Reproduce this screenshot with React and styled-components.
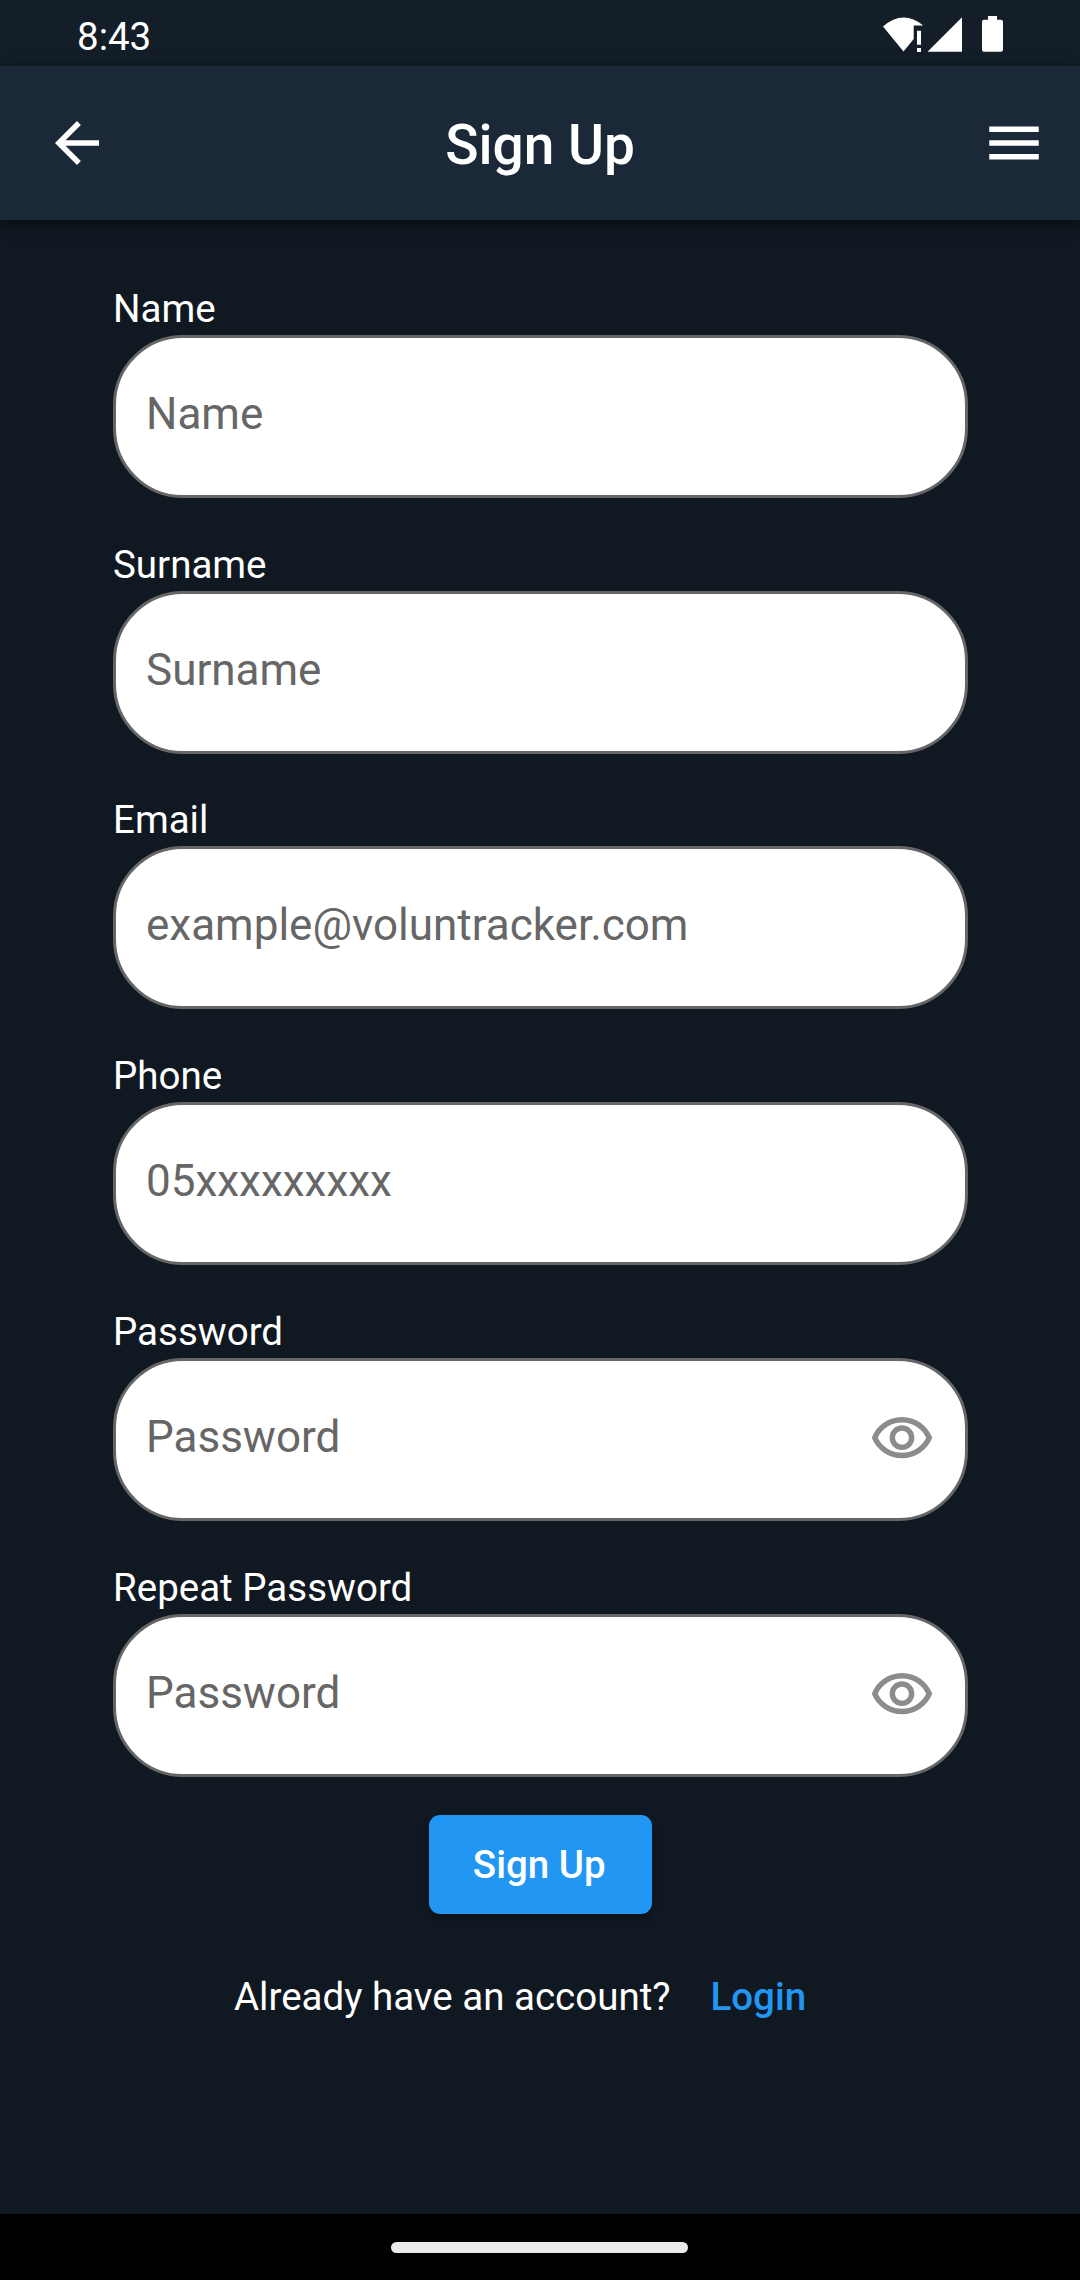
import React from "react";
import styled, { createGlobalStyle } from "styled-components";

const Global = createGlobalStyle`
  *, *::before, *::after { box-sizing: border-box; }
  html, body { margin: 0; padding: 0; background: #101821; }
  body { font-family: Roboto, sans-serif; color: #fff; }
  button, input { font-family: inherit; }
`;

const Screen = styled.div`
  display: flex;
  flex-direction: column;
  width: 1080px;
  height: 2280px;
  background: #101821;
  overflow: hidden;
`;

const StatusBar = styled.div`
  display: flex;
  align-items: center;
  justify-content: space-between;
  height: 66px;
  flex: none;
  padding: 6px 77px 0 77px;
  background: #141e28;
`;

const Clock = styled.span`
  font-size: 38.5px;
  line-height: 45px;
`;

const StatusIcons = styled.svg`
  display: block;
  width: 121px;
  height: 37px;
  margin-bottom: 3px;
  fill: #fff;
`;

const AppBar = styled.header`
  display: grid;
  grid-template-columns: 154px 1fr 154px;
  align-items: center;
  height: 154px;
  flex: none;
  background: #1b2838;
  box-shadow: 0 5px 11px rgba(0, 0, 0, 0.3), 0 2px 20px rgba(0, 0, 0, 0.16);
`;

const Title = styled.h1`
  margin: 0;
  padding-top: 4px;
  text-align: center;
  font-size: 55px;
  line-height: 64px;
  font-weight: 500;
`;

const IconButton = styled.button`
  display: flex;
  align-items: center;
  justify-content: ${(p) => (p.$end ? "flex-end" : "flex-start")};
  height: 154px;
  padding: ${(p) => (p.$end ? "0 33px 0 0" : "0 0 0 44px")};
  border: 0;
  background: none;
`;

const Glyph = styled.svg`
  display: block;
  flex: none;
  width: 66px;
  height: 66px;
  fill: ${(p) => p.$color || "#fff"};
`;

const Form = styled.form`
  display: flex;
  flex-direction: column;
  align-items: center;
  flex: 1;
  padding: 65.9px 112.5px 0 113px;
`;

const Field = styled.label`
  display: flex;
  flex-direction: column;
  width: 100%;
  height: 255.75px;
  flex: none;
`;

const LabelText = styled.span`
  height: 49px;
  flex: none;
  line-height: 45px;
  font-size: 38.5px;
`;

const InputBox = styled.span`
  display: flex;
  align-items: center;
  height: 163px;
  padding: 0 30px;
  border: 3px solid #666;
  border-radius: 70px;
  background: #fff;
`;

const Input = styled.input`
  flex: 1;
  min-width: 0;
  height: 60px;
  padding: 0 0 5px;
  border: 0;
  outline: 0;
  background: transparent;
  font-size: 44px;
  &::placeholder { color: #666; opacity: 1; }
`;

const SubmitButton = styled.button`
  width: 223px;
  height: 99px;
  margin-top: -5.4px;
  padding: 0 2px 0 0;
  flex: none;
  border: 0;
  border-radius: 11px;
  background: #2196f3;
  color: #fff;
  font-size: 38.5px;
  font-weight: 500;
  box-shadow: 0 4px 6px rgba(0, 0, 0, 0.3);
`;

const LoginRow = styled.div`
  display: flex;
  gap: 40px;
  align-self: flex-start;
  margin: 60px 0 0 121px;
  font-size: 38.5px;
  line-height: 45px;
  white-space: nowrap;
`;

const LoginLink = styled.a`
  color: #2196f3;
  font-weight: 500;
`;

const NavBar = styled.div`
  display: flex;
  align-items: center;
  justify-content: center;
  height: 66px;
  flex: none;
  padding-right: 2px;
  background: #000;
`;

const Handle = styled.div`
  width: 297px;
  height: 11px;
  border-radius: 6px;
  background: #ebebeb;
`;

const fields = [
  { label: "Name", hint: "Name" },
  { label: "Surname", hint: "Surname" },
  { label: "Email", hint: "example@voluntracker.com" },
  { label: "Phone", hint: "05xxxxxxxxx" },
  { label: "Password", hint: "Password", secret: true },
  { label: "Repeat Password", hint: "Password", secret: true },
];

const EyeIcon = () => (
  <Glyph viewBox="0 0 24 24" $color="#8c8c8c">
    <path d="M12 6c3.79 0 7.17 2.13 8.82 5.5C19.17 14.87 15.79 17 12 17s-7.17-2.13-8.82-5.5C4.83 8.13 8.21 6 12 6m0-2C7 4 2.73 7.11 1 11.5 2.73 15.89 7 19 12 19s9.270-3.110 11-7.500C21.270 7.110 17 4 12 4zm0 5c1.380 0 2.500 1.120 2.500 2.500S13.380 14 12 14s-2.500-1.120-2.500-2.500S10.620 9 12 9m0-2c-2.480 0-4.500 2.020-4.500 4.500S9.520 16 12 16s4.500-2.020 4.500-4.500S14.480 7 12 7z" />
  </Glyph>
);

export default function App() {
  return (
    <Screen>
      <Global />
      <StatusBar>
        <Clock>8:43</Clock>
        <StatusIcons viewBox="0 0 121 37">
          <path d="M1 10.500Q21-7 41.300 9.500H31.700V23L21.500 35.500Z" />
          <path d="M35 14.800h4v14h-4zM35 32h4v4h-4z" />
          <path d="M45.500 35.700L80 1.300V35.700Z" />
          <path d="M106 0h9v3.800h4q2 0 2 2.200v27.500q0 2.200-2 2.200h-17q-2 0-2-2.200V6q0-2.200 2-2.200h4z" />
        </StatusIcons>
      </StatusBar>
      <AppBar>
        <IconButton aria-label="Back">
          <Glyph viewBox="0 0 24 24">
            <path d="M20 11H7.830l5.590-5.590L12 4l-8 8 8 8 1.410-1.410L7.830 13H20v-2z" />
          </Glyph>
        </IconButton>
        <Title>Sign Up</Title>
        <IconButton aria-label="Menu" $end>
          <Glyph viewBox="0 0 24 24">
            <path d="M3 18h18v-2H3v2zm0-5h18v-2H3v2zm0-7v2h18V6H3z" />
          </Glyph>
        </IconButton>
      </AppBar>
      <Form>
        {fields.map((f) => (
          <Field key={f.label}>
            <LabelText>{f.label}</LabelText>
            <InputBox>
              <Input placeholder={f.hint} type={f.secret ? "password" : "text"} />
              {f.secret && <EyeIcon />}
            </InputBox>
          </Field>
        ))}
        <SubmitButton type="button">Sign Up</SubmitButton>
        <LoginRow>
          <span>Already have an account?</span>
          <LoginLink>Login</LoginLink>
        </LoginRow>
      </Form>
      <NavBar>
        <Handle />
      </NavBar>
    </Screen>
  );
}
